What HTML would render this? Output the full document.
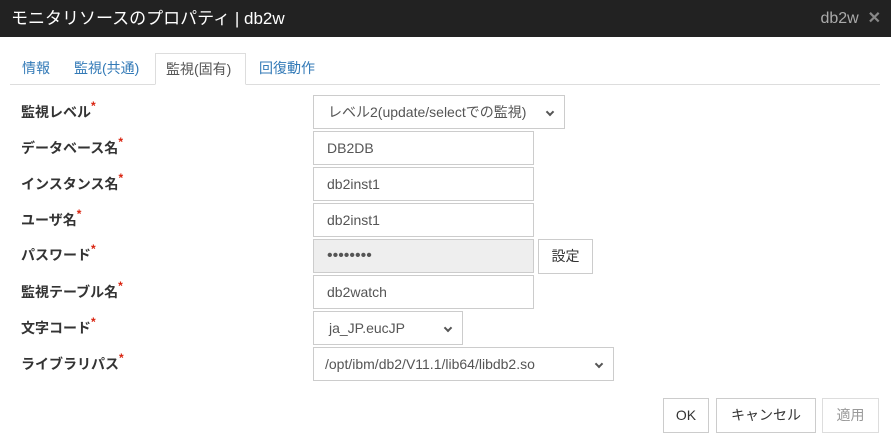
<!DOCTYPE html>
<html><head><meta charset="utf-8"><style>
*{box-sizing:border-box;margin:0;padding:0}
body{width:891px;height:438px;background:#fff;font-family:"Liberation Sans","Noto Sans CJK JP",sans-serif;font-size:14px;color:#333;position:relative;overflow:hidden}
.title{position:absolute;left:0;top:0;width:891px;height:37px;background:#222;color:#fff;font-size:17px;line-height:37px;padding-left:11px}
.title .r{position:absolute;right:10px;top:0;color:#aaa;font-size:16px}
.tabline{position:absolute;left:10px;top:84px;width:870px;height:1px;background:#ddd}
.tab{position:absolute;top:53px;height:32px;line-height:30px;color:#337ab7;font-size:14px}
.tab.act{border:1px solid #ddd;border-bottom:1px solid #fff;color:#555;background:#fff;padding:0 10px}
.lbl{position:absolute;left:21px;font-weight:bold;font-size:14px;color:#333}
.lbl i{color:#d9230f;font-style:normal;font-size:12px;vertical-align:top;position:relative;top:-3px}
.box{position:absolute;left:313px;border:1px solid #ccc;height:34px;line-height:32px;padding-left:13px;font-size:14px;color:#555;background:#fff}
.sel:after{content:"";position:absolute;right:11px;top:13px;width:4px;height:4px;border-right:2px solid #555;border-bottom:2px solid #555;transform:rotate(45deg)}
.btn{position:absolute;border:1px solid #ccc;height:35px;line-height:33px;text-align:center;font-size:14px;color:#333;background:#fff}
</style></head><body>
<div class="title">モニタリソースのプロパティ | db2w<span class="r">db2w&nbsp; <b style="color:#888">✕</b></span></div>
<div class="tabline"></div>
<div class="tab" style="left:22px">情報</div>
<div class="tab" style="left:74px">監視(共通)</div>
<div class="tab act" style="left:155px;width:91px">監視(固有)</div>
<div class="tab" style="left:259px">回復動作</div>

<div class="lbl" style="top:102px">監視レベル<i>*</i></div>
<div class="lbl" style="top:138px">データベース名<i>*</i></div>
<div class="lbl" style="top:174px">インスタンス名<i>*</i></div>
<div class="lbl" style="top:210px">ユーザ名<i>*</i></div>
<div class="lbl" style="top:245px">パスワード<i>*</i></div>
<div class="lbl" style="top:282px">監視テーブル名<i>*</i></div>
<div class="lbl" style="top:318px">文字コード<i>*</i></div>
<div class="lbl" style="top:354px">ライブラリパス<i>*</i></div>

<div class="box sel" style="top:95px;width:252px;padding-left:14px">レベル2(update/selectでの監視)</div>
<div class="box" style="top:131px;width:221px">DB2DB</div>
<div class="box" style="top:167px;width:221px">db2inst1</div>
<div class="box" style="top:203px;width:221px">db2inst1</div>
<div class="box" style="top:239px;width:221px;background:#eee;font-size:16px;letter-spacing:0px">••••••••</div>
<div class="btn" style="left:538px;top:239px;width:55px">設定</div>
<div class="box" style="top:275px;width:221px">db2watch</div>
<div class="box sel" style="top:311px;width:150px;padding-left:15px">ja_JP.eucJP</div>
<div class="box sel" style="top:347px;width:301px;padding-left:11px">/opt/ibm/db2/V11.1/lib64/libdb2.so</div>

<div class="btn" style="left:663px;top:398px;width:46px">OK</div>
<div class="btn" style="left:716px;top:398px;width:100px">キャンセル</div>
<div class="btn" style="left:822px;top:398px;width:57px;color:#999;border-color:#ddd">適用</div>
</body></html>
